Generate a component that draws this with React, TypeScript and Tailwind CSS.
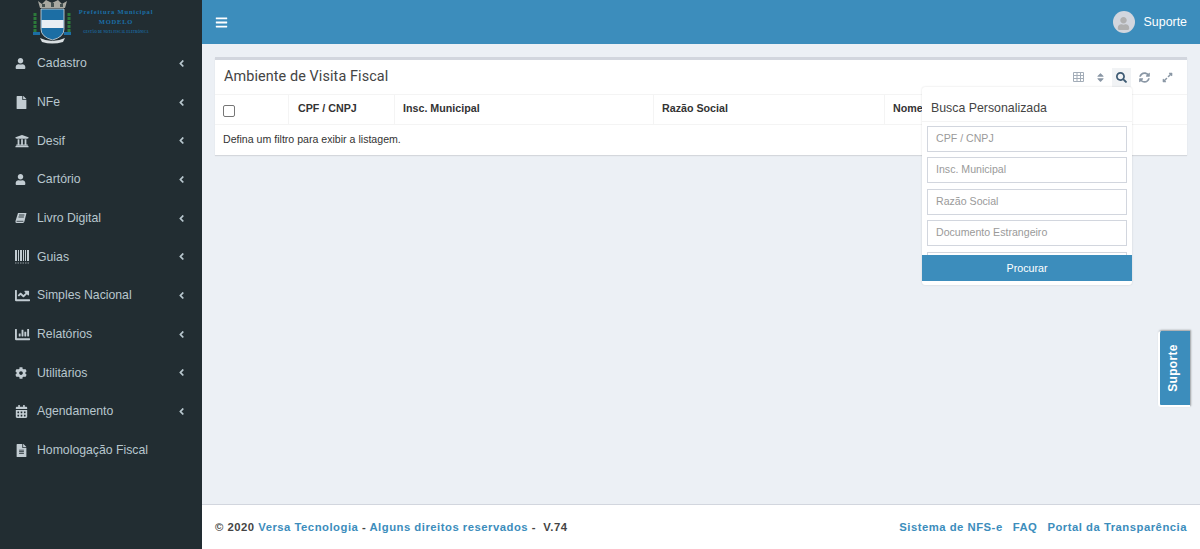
import React from "react";
import {
  FaUser, FaFile, FaUniversity, FaChartLine, FaChartBar, FaCog,
  FaCalendarAlt, FaFileAlt, FaBars, FaAngleLeft, FaSort, FaSearch, FaSyncAlt, FaExpandAlt,
} from "react-icons/fa";

function SlantBook({ size, className }: { size: number; className?: string }) {
  return (
    <svg width={size} height={size} viewBox="0 0 12 12" className={className} fill="currentColor">
      <path d="M3 1 H11.5 L9.4 9.6 Q9.2 11 7.8 11 H1.6 Q0 11 0.5 9 Z" />
      <path d="M4 3 H9.4 M3.5 5 H8.9" stroke="#222d32" strokeWidth="0.9" />
      <path d="M1.6 9.3 H8.4" stroke="#222d32" strokeWidth="0.8" />
    </svg>
  );
}

function Barcode({ size, className }: { size: number; className?: string }) {
  return (
    <svg width={size} height={size} viewBox="0 0 14 14" className={className} fill="currentColor">
      <path d="M0 0h2v11H0zM3 0h1v11H3zM5 0h2v11H5zM8 0h1v11H8zM10 0h1v11h-1zM12 0h2v11h-2z" />
      <path d="M0 13h14" stroke="currentColor" strokeWidth="0.7" strokeDasharray="1.5 1" />
    </svg>
  );
}

function GridIcon() {
  return (
    <svg width="11" height="10" viewBox="0 0 11 10" fill="none" stroke="#a3adb8" strokeWidth="1">
      <path d="M.5.5h10v9H.5zM.5 3.5h10M.5 6.5h10M4 .5v9M7.5.5v9" />
    </svg>
  );
}

const menu = [
  { label: "Cadastro", Icon: FaUser, size: 11 },
  { label: "NFe", Icon: FaFile, size: 13 },
  { label: "Desif", Icon: FaUniversity, size: 14 },
  { label: "Cartório", Icon: FaUser, size: 11 },
  { label: "Livro Digital", Icon: SlantBook, size: 12 },
  { label: "Guias", Icon: Barcode, size: 14 },
  { label: "Simples Nacional", Icon: FaChartLine, size: 15 },
  { label: "Relatórios", Icon: FaChartBar, size: 15 },
  { label: "Utilitários", Icon: FaCog, size: 12 },
  { label: "Agendamento", Icon: FaCalendarAlt, size: 13 },
  { label: "Homologação Fiscal", Icon: FaFileAlt, size: 13, noArrow: true },
];

function Crest() {
  return (
    <svg width="42" height="44" viewBox="0 0 42 44" className="shrink-0">
      <path d="M5 1 L9 4 L13 0 L19 3 L25 0 L29 4 L34 1 L32 8 H7 Z" fill="#a9a9a2" />
      <path d="M9 4h3v3H9zM18 3h3v4h-3zM27 4h3v3h-3z" fill="#44504f" />
      <path d="M8 9 H31 V29 Q31 37 19.5 40 Q8 37 8 29 Z" fill="#1c6ea4" stroke="#d8dde0" strokeWidth="0.8" />
      <rect x="8.5" y="20" width="22" height="8" fill="#e8eef3" />
      <path d="M2 13 V33 M36 13 V33" stroke="#2c7a3a" strokeWidth="3" strokeDasharray="3 1" />
      <path d="M0 32h7v3H0zM31 32h7v3h-7z" fill="#1c6ea4" />
      <path d="M7 38 Q19 44 32 38 L30 42 Q19 45 9 42 Z" fill="#d8dde0" />
    </svg>
  );
}

function Field({ text }: { text: string }) {
  return (
    <div className="h-[26px] shrink-0 border border-[#d2d6de] bg-white pl-[8px] flex items-center text-[10.6px] text-[#9a9a9a]">
      {text}
    </div>
  );
}

export default function App() {
  return (
    <div className="flex h-[549px] w-[1200px] overflow-hidden bg-[#ecf0f5] font-['Liberation_Sans',Arial,sans-serif] relative">
      <aside className="w-[202px] shrink-0 bg-[#222d32] flex flex-col">
        <div className="h-[44px] flex pl-[33px] overflow-hidden">
          <Crest />
          <div className="ml-[1px] w-[80px] flex flex-col items-center font-['Liberation_Serif',serif] font-bold text-[#1a6fa8] pt-[8px]">
            <span className="text-[6.5px] leading-[8px] tracking-[0.8px] whitespace-nowrap">Prefeitura Municipal</span>
            <span className="text-[6.5px] leading-[8px] tracking-[0.8px] mt-[2px]">MODELO</span>
            <span className="text-[3px] leading-[4px] mt-[4px] tracking-[0.2px] whitespace-nowrap">GESTÃO DE NOTA FISCAL ELETRÔNICA</span>
          </div>
        </div>
        <nav className="flex flex-col">
          {menu.map(({ label, Icon, size, noArrow }) => (
            <div key={label} className="h-[38.7px] flex items-center text-[#b8c7ce] text-[12.25px]">
              <span className="w-[37px] pl-[15px] flex items-center justify-start shrink-0">
                <Icon size={size} className="text-[#c2ccd2]" />
              </span>
              <span className="flex-1">{label}</span>
              {!noArrow && <FaAngleLeft size={11} className="mr-[15px] text-[#b8c7ce]" />}
            </div>
          ))}
        </nav>
      </aside>

      <div className="flex-1 flex flex-col min-w-0">
        <header className="h-[44px] shrink-0 bg-[#3c8dbc] flex items-center justify-between pl-[13px] pr-[13px] text-white">
          <FaBars size={13} />
          <div className="flex items-center gap-[9px] text-[12.4px]">
            <span className="w-[22px] h-[22px] rounded-full bg-[#d2d6de] flex items-center justify-center overflow-hidden">
              <FaUser size={13} className="text-[#b0b0b0] mt-[2px]" />
            </span>
            <span>Suporte</span>
          </div>
        </header>

        <main className="flex-1 px-[13px] pt-[13px] min-h-0">
          <section className="bg-white border-t-[3px] border-[#d2d6de] shadow-[0_1px_1px_rgba(0,0,0,0.1)]">
            <div className="h-[34px] flex items-center justify-between pl-[9px] pr-[10px]">
              <h1 className="text-[14.4px] text-[#444] font-['Roboto',sans-serif] tracking-[0.1px]">Ambiente de Visita Fiscal</h1>
              <div className="flex items-center text-[#8a97a5]">
                <span className="w-[19px] flex justify-center"><GridIcon /></span>
                <span className="w-[24px] flex justify-center"><FaSort size={11} /></span>
                <span className="w-[19px] h-[19px] bg-[#f1f3f5] flex items-center justify-center">
                  <FaSearch size={11} className="text-[#3d5a73]" />
                </span>
                <span className="w-[27px] flex justify-center"><FaSyncAlt size={11} /></span>
                <span className="w-[19px] flex justify-center"><FaExpandAlt size={11} /></span>
              </div>
            </div>
            <div className="flex h-[31px] border-t border-b border-[#f4f4f4] text-[10.7px] font-bold text-[#333] items-stretch">
              <div className="w-[74px] border-r border-[#f4f4f4] flex items-center pl-[8px]">
                <span className="w-[12px] h-[12px] border border-[#767676] rounded-[2px] bg-white mt-[2px]" />
              </div>
              <div className="w-[106px] border-r border-[#f4f4f4] flex items-center pl-[9px] pb-[2px]">CPF / CNPJ</div>
              <div className="w-[259px] border-r border-[#f4f4f4] flex items-center pl-[8px] pb-[2px]">Insc. Municipal</div>
              <div className="w-[231px] border-r border-[#f4f4f4] flex items-center pl-[8px] pb-[2px]">Razão Social</div>
              <div className="flex-1 flex items-center pl-[8px] pb-[2px]">Nome</div>
            </div>
            <div className="h-[30px] flex items-center pl-[8px] text-[10.6px] text-[#333]">
              Defina um filtro para exibir a listagem.
            </div>
          </section>
        </main>

        <footer className="h-[45px] shrink-0 bg-white border-t border-[#d2d6de] flex items-center justify-between px-[13px] text-[11.3px] font-bold tracking-[0.5px] text-[#444]">
          <div className="whitespace-pre">
            © 2020 <span className="text-[#3c8dbc]">Versa Tecnologia</span> - <span className="text-[#3c8dbc]">Alguns direitos reservados</span> -  V.74
          </div>
          <div className="flex gap-[10px] text-[#3c8dbc]">
            <span>Sistema de NFS-e</span>
            <span>FAQ</span>
            <span>Portal da Transparência</span>
          </div>
        </footer>
      </div>

      <div className="absolute left-[922px] top-[87px] w-[210px] h-[198px] bg-white rounded-[3px] shadow-[0_0_2px_rgba(0,0,0,0.15)] flex flex-col overflow-hidden">
        <div className="h-[35px] shrink-0 border-b border-[#f4f4f4] pl-[9px] pt-[9px] flex items-center text-[12.35px] text-[#444]">
          Busca Personalizada
        </div>
        <div className="relative flex-1 flex flex-col gap-[5.4px] px-[5px] pt-[4px]">
          <Field text="CPF / CNPJ" />
          <Field text="Insc. Municipal" />
          <Field text="Razão Social" />
          <Field text="Documento Estrangeiro" />
          <div className="h-[6px] shrink-0 border-x border-t border-[#d2d6de]" />
          <div className="absolute left-0 right-0 top-[133px] h-[26px] bg-[#3c8dbc] text-white text-[10.7px] flex items-center justify-center">
            Procurar
          </div>
        </div>
      </div>

      <div className="absolute left-[1158px] top-[331px] w-[32px] h-[76px] bg-[#3c8dbc] rounded-l-[3px] border-l-2 border-b-2 border-white shadow-[1px_-1px_2px_rgba(0,0,0,0.35)] flex items-center justify-center pr-[4px]">
        <span className="text-white text-[12px] font-bold -rotate-90 tracking-[0.3px]">Suporte</span>
      </div>
    </div>
  );
}
